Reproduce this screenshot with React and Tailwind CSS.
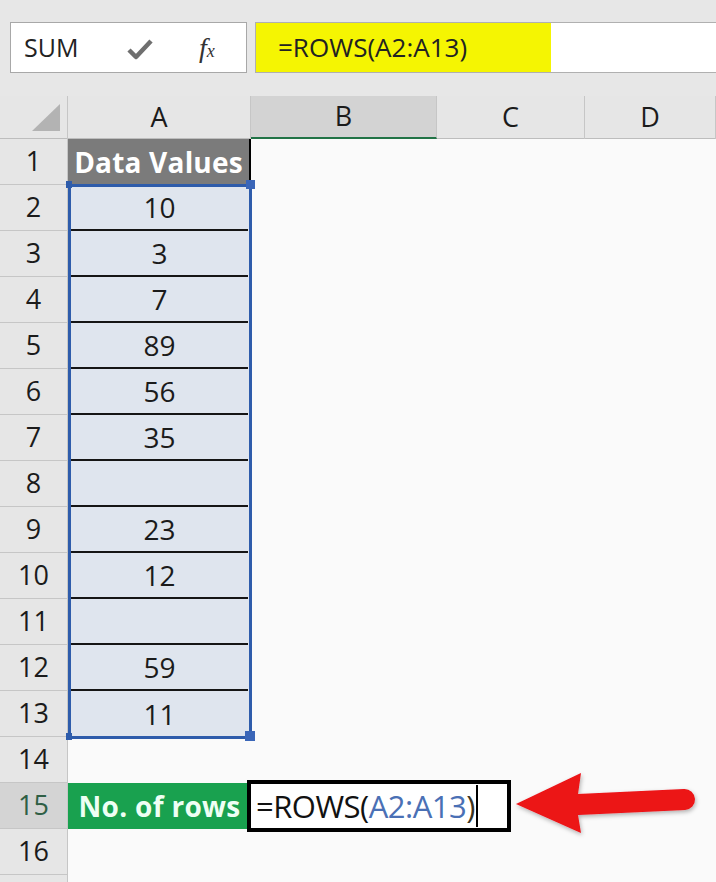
import React from 'react'

const FONT = { fontFamily: '"Open Sans", "Noto Sans", Arial, sans-serif' }

const COLS = ['A', 'B', 'C', 'D']

// value for column A in rows 2..13 (empty string = blank cell)
const DATA = { 2: '10', 3: '3', 4: '7', 5: '89', 6: '56', 7: '35', 8: '', 9: '23', 10: '12', 11: '', 12: '59', 13: '11' }

function CheckIcon() {
  return (
    <svg width="26" height="22" viewBox="0 0 26 22">
      <path d="M2 12 L9 19 L24 3" fill="none" stroke="#6f6f6f" strokeWidth="4.5" strokeLinejoin="round" />
    </svg>
  )
}

function RowHeader({ n }) {
  const active = n === 15
  return (
    <div
      className={`flex items-center justify-center border-b border-r border-[#c6c6c6] text-[27px] ${
        active ? 'bg-[#d4d4d4] text-[#2f5f45]' : 'bg-[#e6e6e6] text-[#1b1b1b]'
      }`}
    >
      {n}
    </div>
  )
}

function ColA({ n }) {
  if (n === 1) {
    return (
      <div className="flex items-center justify-center bg-[#7b7b7b] text-white font-bold text-[28px] tracking-[0.2px] border-r-2 border-black">
        Data Values
      </div>
    )
  }
  if (n >= 2 && n <= 13) {
    return (
      <div className="flex flex-col bg-[#dfe5ee]">
        <div className="flex-1 flex items-center justify-center text-[28px] text-[#1b1b1b]">{DATA[n]}</div>
        {n < 13 && <div className="mx-[3px] h-[2px] bg-[#151515]" />}
      </div>
    )
  }
  if (n === 15) {
    return (
      <div className="flex items-center justify-center bg-[#19a14f] text-[#eefff4] font-bold text-[28px] tracking-[0.3px]">
        No. of rows
      </div>
    )
  }
  return <div />
}

export default function App() {
  const rows = Array.from({ length: 16 }, (_, i) => i + 1)

  return (
    <div className="relative w-[716px] h-[882px] overflow-hidden bg-[#fafafa]" style={FONT}>
      {/* formula bar */}
      <div className="h-[96px] bg-[#e7e7e7] pt-[22px] pl-[10px] flex gap-[8px]">
        <div className="w-[237px] h-[51px] bg-white border border-[#a8a8a8] flex items-center">
          <span className="pl-[13px] w-[110px] text-[25px] text-[#222]">SUM</span>
          <span className="ml-[6px] pt-[3px]"><CheckIcon /></span>
          <span
            className="ml-[46px] text-[28px] italic text-[#333]"
            style={{ fontFamily: '"Liberation Serif", "DejaVu Serif", serif' }}
          >
            f<span className="text-[18px]">x</span>
          </span>
        </div>
        <div className="flex-1 h-[51px] bg-white border-y border-l border-[#b0b0b0] flex">
          <div className="w-[295px] bg-[#f5f502] flex items-center pl-[22px] text-[26px] text-[#222]">
            =ROWS(A2:A13)
          </div>
        </div>
      </div>

      {/* column headers */}
      <div className="grid grid-cols-[68px_183px_186px_148px_1fr] h-[43px] bg-[#e6e6e6] border-b border-[#bdbdbd]">
        <div className="relative border-r border-[#c6c6c6]">
          <svg className="absolute left-[32px] top-[8px]" width="28" height="28" viewBox="0 0 28 28">
            <path d="M28 0 L28 27 L0 27 Z" fill="#b3b3b3" />
          </svg>
        </div>
        {COLS.map((c) => (
          <div
            key={c}
            className={`flex items-center justify-center text-[27px] text-[#1b1b1b] border-r border-[#c6c6c6] ${
              c === 'B' ? 'bg-[#d3d3d3] border-b-2 border-b-[#217346]' : ''
            }`}
          >
            {c}
          </div>
        ))}
      </div>

      {/* sheet rows */}
      <div className="grid grid-cols-[68px_183px_186px_148px_1fr] auto-rows-[46px]">
        {rows.map((n) => (
          <React.Fragment key={n}>
            <RowHeader n={n} />
            <ColA n={n} />
            <div />
            <div />
            <div />
          </React.Fragment>
        ))}
        <div className="h-[10px] bg-[#e6e6e6] border-r border-[#c6c6c6]" />
      </div>

      {/* selection A2:A13 */}
      <div className="absolute left-[68px] top-[184px] w-[184px] h-[555px] border-[3px] border-[#2e5cab]" />
      <div className="absolute left-[66px] top-[181px] w-[6px] h-[7px] bg-[#2e5cab]" />
      <div className="absolute left-[246px] top-[180px] w-[9px] h-[9px] bg-[#3a66b8]" />
      <div className="absolute left-[66px] top-[733px] w-[6px] h-[7px] bg-[#2e5cab]" />
      <div className="absolute left-[245px] top-[731px] w-[10px] h-[10px] bg-[#3a66b8]" />

      {/* active cell B15 in edit mode */}
      <div className="absolute left-[247px] top-[780px] w-[264px] h-[52px] border-[4px] border-black bg-white flex items-center pl-[5px] text-[31px] tracking-[-0.5px] text-[#111]">
        <span>=ROWS(</span>
        <span className="text-[#4a70b5]">A2:A13</span>
        <span className="text-[#3a3320]">)</span>
        <span className="ml-[1px] w-[2px] h-[42px] bg-black" />
      </div>

      {/* red arrow */}
      <svg className="absolute left-0 top-0 pointer-events-none" width="716" height="882" viewBox="0 0 716 882">
        <defs>
          <filter id="sh" x="-20%" y="-40%" width="140%" height="180%">
            <feDropShadow dx="1" dy="2" stdDeviation="2" floodColor="#000" floodOpacity="0.3" />
          </filter>
        </defs>
        <path
          d="M516 804 L581 773 L578 794 L684 789 A10.5 10.5 0 0 1 685 810 L578 815 L581 833 Z"
          fill="#ec1218"
          filter="url(#sh)"
        />
      </svg>
    </div>
  )
}
